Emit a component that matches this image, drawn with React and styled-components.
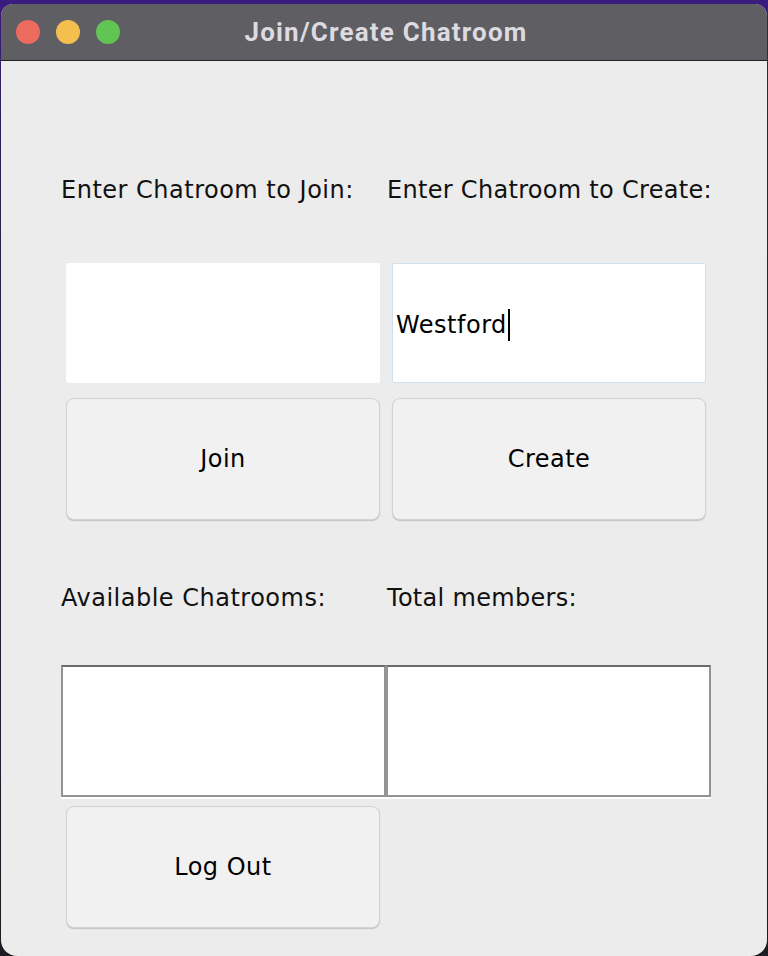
import React from 'react';
import styled, {createGlobalStyle} from 'styled-components';

const GlobalStyle = createGlobalStyle`
  html, body {
    margin: 0;
    padding: 0;
  }
  body {
    background: linear-gradient(180deg, #3b1c7e 0%, #2a1f4a 20%, #1d1c22 100%);
    font-family: "DejaVu Sans", "Open Sans", sans-serif;
  }
`;

const Desktop = styled.div`
  width: 768px;
  height: 956px;
  padding: 4px 1px 0 1px;
  box-sizing: border-box;
  overflow: hidden;
`;

const Window = styled.div`
  width: 766px;
  height: 952px;
  border-radius: 12px 12px 16px 16px;
  overflow: hidden;
  background: #ececec;
  display: flex;
  flex-direction: column;
`;

const TitleBar = styled.div`
  height: 56px;
  flex: none;
  background: #5f5e63;
  border-bottom: 1px solid #232323;
  display: grid;
  grid-template-columns: 1fr auto 1fr;
  align-items: center;
`;

const Lights = styled.div`
  display: flex;
  gap: 16px;
  padding-left: 15px;
`;

const Light = styled.span`
  width: 24px;
  height: 24px;
  border-radius: 50%;
  background: ${p => p.$color};
`;

const Title = styled.div`
  font-family: "Roboto", "Liberation Sans", sans-serif;
  font-weight: 700;
  font-size: 26px;
  color: #dddbe0;
  letter-spacing: 1.2px;
  margin-left: 4px;
`;

const Form = styled.div`
  margin: 61px 0 0 60px;
  width: 650px;
  display: grid;
  grid-template-columns: 325px 325px;
  grid-template-rows: repeat(6, 135px);
`;

const Label = styled.div`
  align-self: center;
  padding-left: ${p => (p.$right ? '1px' : '0')};
  margin-top: ${p => p.$shift || 0}px;
  font-size: 24px;
  letter-spacing: ${p => (p.$right ? '0.3px' : '0.5px')};
  color: #111;
  white-space: nowrap;
`;

const Field = styled.div`
  margin: 6px ${p => (p.$right ? '5px' : '6px')} 9px ${p => (p.$right ? '6px' : '5px')};
  background: #fff;
  box-sizing: border-box;
  border: 1px solid ${p => (p.$focused ? '#cfe0ef' : '#fff')};
  border-radius: 2px;
  display: flex;
  align-items: center;
  padding: 4px 0 0 3px;
  font-size: 24px;
  letter-spacing: 0.5px;
  color: #000;
`;

const Caret = styled.span`
  display: inline-block;
  width: 2px;
  height: 32px;
  background: #000;
  margin-left: 1px;
`;

const Button = styled.button`
  margin: 6px ${p => (p.$right ? '5px' : '6px')} 7px ${p => (p.$right ? '6px' : '5px')};
  margin-top: ${p => p.$top || 6}px;
  margin-bottom: ${p => p.$bottom || 7}px;
  background: #f1f1f1;
  border: 1px solid #d2d2d2;
  border-radius: 8px;
  box-shadow: 0 1px 1px rgba(0, 0, 0, 0.18);
  font-family: "DejaVu Sans", "Open Sans", sans-serif;
  font-size: 24px;
  letter-spacing: 0.5px;
  color: #000;
  padding: 0;
`;

const List = styled.div`
  margin-top: 3px;
  background: #fff;
  border: 2px solid #939393;
  border-top-color: #6b6b6b;
  box-shadow: 0 2px 0 #fff;
`;

export default function App() {
  return (
    <>
      <GlobalStyle />
      <Desktop>
        <Window>
          <TitleBar>
            <Lights>
              <Light $color="#ec6a5e" />
              <Light $color="#f4bf4f" />
              <Light $color="#61c554" />
            </Lights>
            <Title>Join/Create Chatroom</Title>
            <span />
          </TitleBar>
          <Form>
            <Label>Enter Chatroom to Join:</Label>
            <Label $right>Enter Chatroom to Create:</Label>
            <Field />
            <Field $right $focused>
              <span>Westford</span>
              <Caret />
            </Field>
            <Button>Join</Button>
            <Button $right>Create</Button>
            <Label $shift={6}>Available Chatrooms:</Label>
            <Label $right $shift={6}>Total members:</Label>
            <List />
            <List />
            <Button $top={9} $bottom={4}>Log Out</Button>
          </Form>
        </Window>
      </Desktop>
    </>
  );
}
